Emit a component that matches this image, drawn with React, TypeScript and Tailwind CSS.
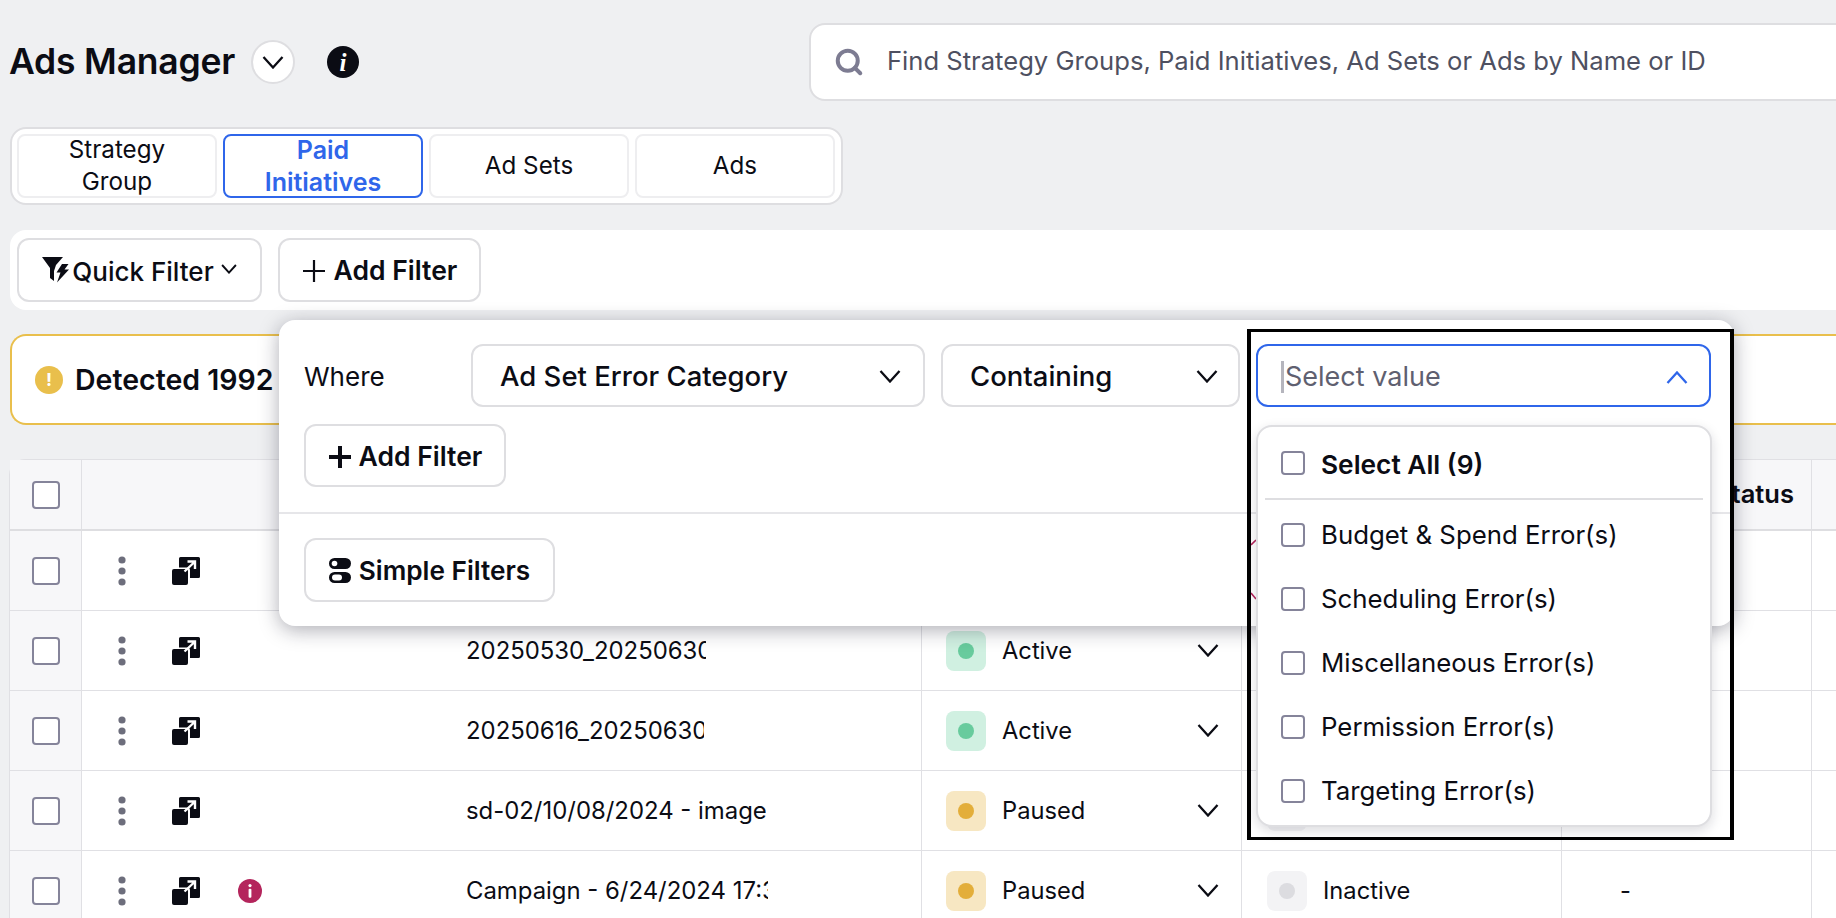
import { Search } from "lucide-react";

const Box = ({ className = "" }: { className?: string }) => (
  <span className={"block rounded-[4px] border-2 border-[#85849a] bg-white " + className} />
);

const Chevron = ({ up = false, small = false, className = "" }: { up?: boolean; small?: boolean; className?: string }) => (
  <svg
    width={small ? 16 : 22}
    height={small ? 10 : 13}
    viewBox="0 0 22 13"
    fill="none"
    stroke="currentColor"
    strokeWidth={small ? 2.6 : 2.3}
    className={"shrink-0 " + className}
  >
    <path d={up ? "M1.5 12 11 1.5 20.5 12" : "M1.5 1 11 11.5 20.5 1"} />
  </svg>
);

const PlusIcon = ({ bold = false }: { bold?: boolean }) => (
  <svg width="24" height="24" viewBox="0 0 24 24" stroke="currentColor" strokeWidth={bold ? 4 : 2.2} className="shrink-0">
    <path d="M12 1v22M1 12h22" />
  </svg>
);

const Dots = () => (
  <svg width="8" height="30" viewBox="0 0 8 30" className="fill-[#6d6e7c]">
    <circle cx="4" cy="4" r="3.6" />
    <circle cx="4" cy="15" r="3.6" />
    <circle cx="4" cy="26" r="3.6" />
  </svg>
);

const OpenIcon = () => (
  <svg width="28" height="28" viewBox="0 0 28 28" className="fill-[#0b0c14]">
    <path d="M7 1.5A1.5 1.5 0 0 1 8.5 0h18A1.5 1.5 0 0 1 28 1.5v18a1.5 1.5 0 0 1-1.5 1.5H18v-7.5a3 3 0 0 0-3-3H7z" />
    <rect x="0" y="12" width="16" height="16" rx="2" />
    <path d="M12.5 14.5 22.5 5M15.5 4.5h7.5V12" fill="none" stroke="#fff" strokeWidth="2.4" />
  </svg>
);

const ErrorIcon = () => (
  <span className="flex h-6 w-6 items-center justify-center rounded-full bg-[#b4255c]">
    <svg width="4" height="14" viewBox="0 0 4 14" className="fill-white">
      <circle cx="2" cy="1.6" r="1.6" />
      <rect x="0.6" y="4.8" width="2.8" height="9" rx="1" />
    </svg>
  </span>
);

const Pill = ({ bg, dot }: { bg: string; dot: string }) => (
  <span className={"flex h-10 w-10 shrink-0 items-center justify-center rounded-lg " + bg}>
    <span className={"h-4 w-4 rounded-full " + dot} />
  </span>
);

const rows = [
  { name: "", width: "max-w-[238px]", status: "", error: false, other: "" },
  { name: "20250530_20250630", width: "max-w-[240px]", status: "Active", error: false, other: "" },
  { name: "20250616_20250630", width: "max-w-[238px]", status: "Active", error: false, other: "" },
  { name: "sd-02/10/08/2024 - image", width: "max-w-[300px]", status: "Paused", error: false, other: "pill" },
  { name: "Campaign - 6/24/2024 17:30", width: "max-w-[302px]", status: "Paused", error: true, other: "Inactive" },
];

const options = ["Budget & Spend Error(s)", "Scheduling Error(s)", "Miscellaneous Error(s)", "Permission Error(s)", "Targeting Error(s)"];

const tabs = ["Strategy Group", "Paid Initiatives", "Ad Sets", "Ads"];

const cellLine = "border-r border-[#e0e0e4]";

export default function App() {
  return (
    <div className="relative h-[918px] w-[1836px] overflow-hidden bg-[#eff0f2] font-['Inter',sans-serif] text-[#0b0c14]">
      <div className="flex h-[101px] items-center pt-[23px] pl-[10px]">
        <h1 className="-ml-px w-[242px] shrink-0 whitespace-nowrap text-[35.5px] font-semibold leading-none tracking-[-0.2px]">Ads Manager</h1>
        <button className="flex h-[44px] w-[44px] shrink-0 items-center justify-center rounded-full border-2 border-[#dedee1] bg-white">
          <Chevron />
        </button>
        <span className="ml-[32px] flex h-8 w-8 shrink-0 items-center justify-center rounded-full bg-[#0b0c14] font-['Liberation_Serif',serif] text-[25px] font-bold italic leading-none text-white">
          i
        </span>
        <div className="ml-[450px] flex h-[78px] w-[1100px] shrink-0 items-center rounded-2xl border-2 border-[#dedee1] bg-white pl-[23px]">
          <Search size={30} strokeWidth={3.2} className="text-[#7d7c92]" />
          <span className="ml-[23px] pb-px whitespace-nowrap text-[25.6px] text-[#4e5061]">Find Strategy Groups, Paid Initiatives, Ad Sets or Ads by Name or ID</span>
        </div>
      </div>

      <div className="ml-[10px] mt-[26px] flex h-[78px] w-[833px] gap-[6px] rounded-2xl border-2 border-[#dedee1] bg-white px-[5px] py-[5px]">
        {tabs.map((t, i) => (
          <div
            key={t}
            className={
              "flex h-[64px] w-[200px] items-center justify-center rounded-lg border-2 px-10 text-center leading-[32px] " +
              (i === 1 ? "border-[#2f66ea] text-[25px] font-semibold text-[#2f66ea]" : "border-[#eeeef0] text-[24.2px]")
            }
          >
            {t}
          </div>
        ))}
      </div>

      <div className="ml-[10px] mt-[25px] flex h-[80px] items-center gap-4 rounded-l-2xl bg-white pl-[7px]">
        <button className="flex h-[64px] w-[245px] items-center justify-center rounded-xl border-2 border-[#dedee1] pt-[2px] text-[26px] font-medium">
          <svg width="27" height="26" viewBox="0 0 27 26" className="mr-[3px] -mt-[2px] fill-[#0b0c14]">
            <path d="M0 0H21L14 8 12 14V24L8 21V11z" />
            <path d="M20 7h6.500l-4 5.500h4.500L15 25.500l3.500-10H14.500z" />
          </svg>
          Quick Filter
          <Chevron small className="ml-[7px] -mt-[4px]" />
        </button>
        <button className="flex h-[64px] w-[203px] items-center justify-center rounded-xl border-2 border-[#dedee1] pt-[2px] text-[26.5px] font-semibold">
          <PlusIcon />
          <span className="ml-[8px]">Add Filter</span>
        </button>
      </div>

      <div className="ml-[10px] mt-[24px] flex h-[91px] items-center rounded-l-2xl border-2 border-r-0 border-[#e9bf4c] bg-white pl-[23px]">
        <span className="flex h-7 w-7 items-center justify-center rounded-full bg-[#e9bf4c] text-[18px] font-bold text-white">!</span>
        <span className="ml-[12px] pt-[2px] text-[28.5px] font-semibold">Detected 1992</span>
      </div>

      <div className="ml-[9px] mt-[34px] rounded-tl-2xl border-l border-t border-[#e0e0e4] bg-white">
        <div className="grid h-[71px] grid-cols-[72px_840px_320px_320px_250px_1fr] border-b-2 border-[#dedee1] bg-[#f7f7f9]">
          <div className={"flex items-center justify-center rounded-tl-2xl " + cellLine}>
            <Box className="h-[28px] w-[28px]" />
          </div>
          <div />
          <div />
          <div />
          <div className="flex items-center justify-end border-l border-r border-[#e0e0e4] pr-[17px] text-[25.5px] font-semibold">Status</div>
          <div />
        </div>
        {rows.map((r, i) => (
          <div key={i} className="grid h-[80px] grid-cols-[72px_840px_320px_320px_250px_1fr] border-b border-[#e0e0e4]">
            <div className={"flex items-center justify-center bg-[#f7f7f9] " + cellLine}>
              <Box className="h-[28px] w-[28px]" />
            </div>
            <div className={"flex items-center " + cellLine}>
              <div className="flex w-[90px] justify-end pr-[46px]">
                <Dots />
              </div>
              <div className="w-[66px]">
                <OpenIcon />
              </div>
              <div className="w-[228px]">{r.error && <ErrorIcon />}</div>
              <span className={"overflow-hidden whitespace-nowrap text-[23.9px] " + r.width}>{r.name}</span>
            </div>
            <div className={"flex items-center pl-[24px] " + cellLine}>
              {r.status && (
                <>
                  <Pill
                    bg={r.status === "Active" ? "bg-[#d0f0e1]" : "bg-[#f7e7c2]"}
                    dot={r.status === "Active" ? "bg-[#68cb9d]" : "bg-[#e3ae3a]"}
                  />
                  <span className="ml-[16px] w-[195px] text-[23.7px]">{r.status}</span>
                  <Chevron />
                </>
              )}
            </div>
            <div className={"flex items-center pl-[25px] " + cellLine}>
              {r.other && <Pill bg="bg-[#f3f3f5]" dot="bg-[#dcdce0]" />}
              {r.other === "Inactive" && <span className="ml-[16px] text-[23.7px]">Inactive</span>}
            </div>
            <div className={"flex items-center pl-[58px] text-[23.7px] " + cellLine}>{r.other === "Inactive" ? "-" : ""}</div>
            <div />
          </div>
        ))}
      </div>

      {/* filter popover */}
      <div className="absolute left-[279px] top-[320px] h-[306px] w-[1455px] rounded-2xl bg-white shadow-[0_4px_20px_rgba(20,20,40,0.35)]">
        <div className="flex items-center gap-[16px] pl-[25px] pt-[24px]">
          <span className="w-[151px] pt-[2px] text-[26px]">Where</span>
          <div className="flex h-[63px] w-[454px] items-center justify-between rounded-xl border-2 border-[#dedee1] pl-[27px] pr-[22px] pt-[2px] text-[27.5px] font-medium">
            Ad Set Error Category
            <Chevron />
          </div>
          <div className="flex h-[63px] w-[299px] items-center justify-between rounded-xl border-2 border-[#dedee1] pl-[27px] pr-[20px] pt-[2px] text-[27.5px] font-medium">
            Containing
            <Chevron />
          </div>
          <div className="flex h-[63px] w-[455px] items-center justify-between rounded-xl border-2 border-[#2f66ea] pl-[23px] pr-[21px] pt-[3px] text-[27px] text-[#5f6070]">
            <span className="flex items-center">
              <span className="mr-[1px] h-[32px] w-[3px] bg-[#b5b5bd]" />
              Select value
            </span>
            <Chevron up className="text-[#2f66ea]" />
          </div>
        </div>
        <button className="ml-[25px] mt-[17px] flex h-[63px] w-[202px] items-center justify-center rounded-xl border-2 border-[#dedee1] pt-[2px] text-[26.5px] font-semibold">
          <PlusIcon bold />
          <span className="ml-[7px]">Add Filter</span>
        </button>
        <div className="mt-[25px] h-[2px] bg-[#e6e6e9]" />
        <button className="ml-[25px] mt-[24px] flex h-[64px] w-[251px] items-center justify-center rounded-xl border-2 border-[#dedee1] pt-[2px] text-[26.2px] font-semibold">
          <svg width="22" height="25" viewBox="0 0 22 25" className="mr-[8px] -mt-[2px] fill-[#0b0c14]">
            <rect x="0" y="0" width="22" height="11" rx="5.500" />
            <rect x="0" y="14" width="22" height="11" rx="5.500" />
            <circle cx="5.500" cy="5.500" r="2.800" fill="#fff" />
            <rect x="3" y="16.500" width="10" height="6" rx="3" fill="#fff" />
          </svg>
          Simple Filters
        </button>
      </div>

      {/* highlight frame around the value select */}
      <div className="absolute left-[1247px] top-[329px] h-[511px] w-[487px] border-x-4 border-y-[3px] border-black" />

      <svg width="6" height="62" viewBox="0 0 6 62" stroke="#b4255c" strokeWidth="1.6" className="absolute left-[1251px] top-[539px]">
        <path d="M0 6 5 1M0 54l5 6" />
      </svg>

      {/* value dropdown */}
      <div className="absolute left-[1256px] top-[425px] h-[402px] w-[456px] rounded-2xl border-2 border-[#dedee1] bg-white shadow-[0_4px_12px_rgba(20,20,40,0.15)]">
        <div className="flex h-[71px] items-center pl-[23px]">
          <Box className="h-[24px] w-[24px]" />
          <span className="ml-[16px] pt-[4px] text-[26.3px] font-semibold">Select All (9)</span>
        </div>
        <div className="mx-[7px] h-[2px] bg-[#dedee1]" />
        <div className="pt-[3px]">
          {options.map((o) => (
            <div key={o} className="flex h-[64px] items-center pl-[23px]">
              <Box className="h-[24px] w-[24px]" />
              <span className="ml-[16px] text-[25.8px]">{o}</span>
            </div>
          ))}
        </div>
      </div>
    </div>
  );
}
